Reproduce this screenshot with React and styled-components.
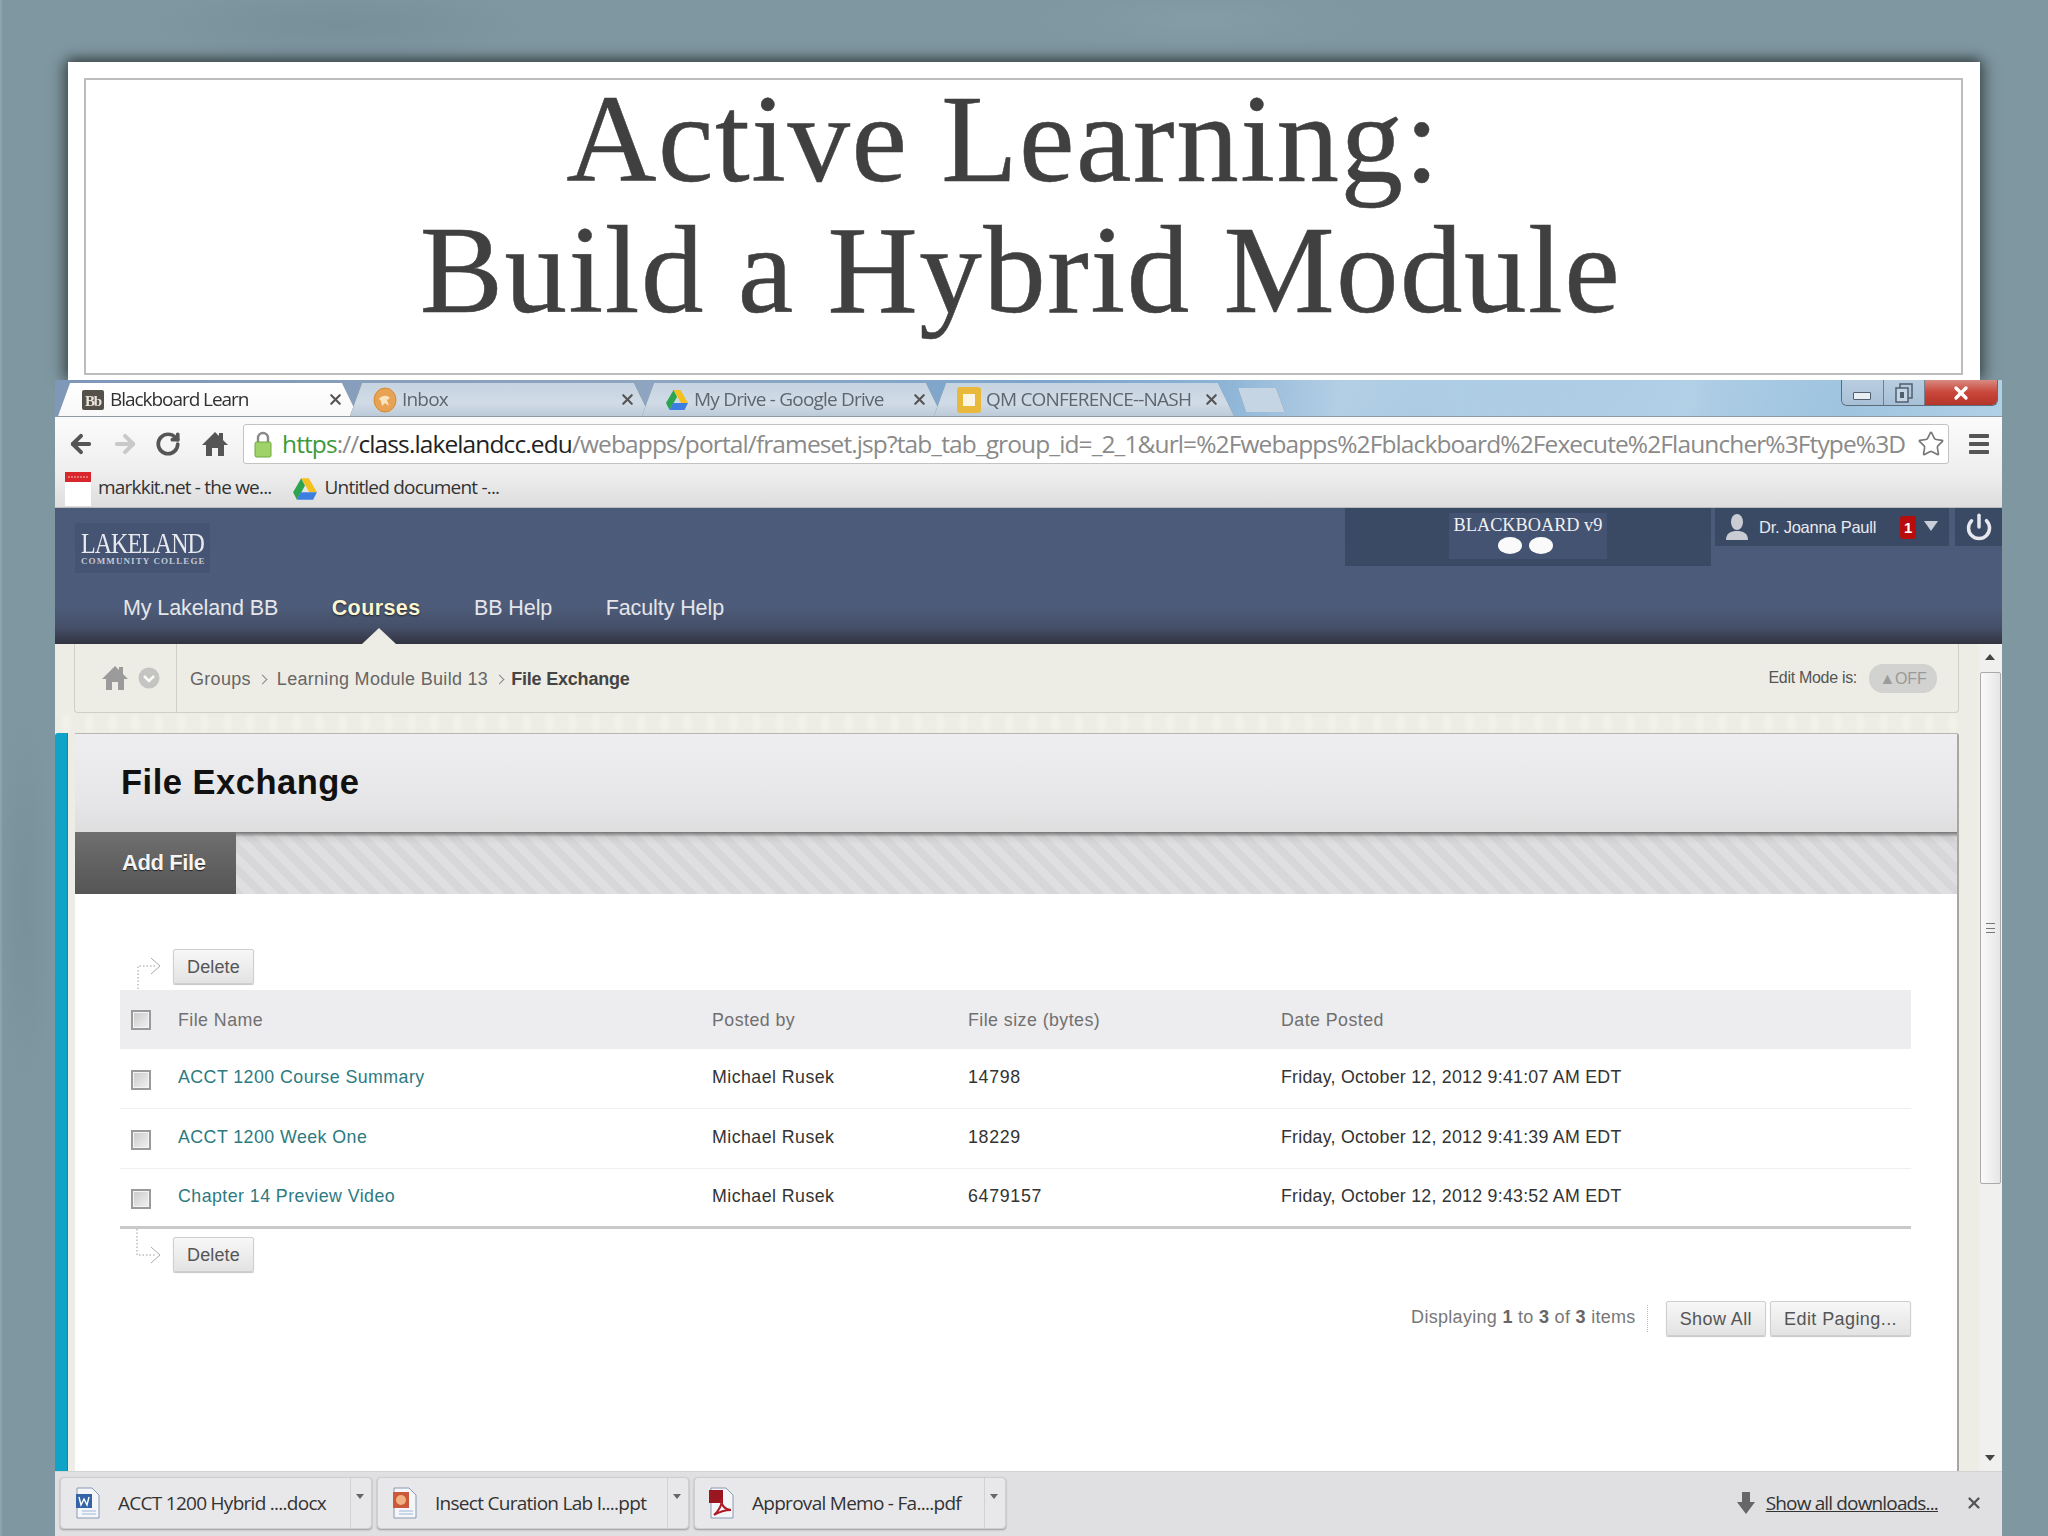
import React from "react";
import styled, { createGlobalStyle } from "styled-components";
import { ArrowLeft, ArrowRight, RotateCw, Star, Power, X } from "lucide-react";

const Global = createGlobalStyle`
  html, body { margin: 0; padding: 0; }
  body { width: 2048px; height: 1536px; overflow: hidden; background: #7f97a1; font-family: "Liberation Sans", Arial, sans-serif; }
  * { box-sizing: border-box; }
`;
const Page = styled.div`
  width: 2048px; height: 1536px; overflow: hidden; display: flex; flex-direction: column;
  background:
    radial-gradient(ellipse 200px 40px at 340px 25px, rgba(115,140,150,.7), transparent),
    radial-gradient(ellipse 160px 30px at 1200px 20px, rgba(135,160,170,.6), transparent),
    radial-gradient(ellipse 30px 200px at 25px 900px, rgba(115,140,150,.6), transparent),
    linear-gradient(90deg, #94a9b0 0, #7f97a1 3px, #7f97a1 100%);
  padding-top: 62px;
`;
const Slide = styled.section`
  margin-left: 68px; width: 1912px; height: 318px; flex: none; background: #fff;
  padding: 16px 17px 5px 16px;
  box-shadow: 0 -4px 10px rgba(50,60,60,.55), -6px 0 12px rgba(50,60,60,.5), 6px 0 12px rgba(50,60,60,.5);
`;
const SlideInner = styled.div`
  height: 100%; border: 2px solid #bdbdbd; text-align: center;
`;
const Title = styled.h1`
  margin: 0; padding: 0 40px 0 0; font: 400 125px/119px "Liberation Serif", "Times New Roman", serif; color: #404040; letter-spacing: 1.5px; -webkit-text-stroke: .5px #404040;
  & span { display: block; }
  & span + span { margin-left: 34px; line-height: 143px; }
`;
const Browser = styled.div`
  margin-left: 55px; width: 1947px; height: 1156px; flex: none; display: flex; flex-direction: column; position: relative;
`;
const TabStrip = styled.div`
  height: 37px; flex: none; display: flex; align-items: flex-end; padding-left: 3px; position: relative;
  border-bottom: 1px solid #8e9aa3;
  background:
    linear-gradient(100deg, transparent 50%, rgba(255,255,255,.35) 66%, rgba(255,255,255,.05) 72%, rgba(255,255,255,.3) 84%, transparent 92%),
    linear-gradient(90deg, #7f97b8 0, #8ea5c0 30%, #7ea6cc 48%, #6d9fcb 60%, #a9cbe3 72%, #8fbadb 85%, #b0d0e6 100%);
`;
const TabWrap = styled.div`
  width: 300px; height: 33px; margin-right: -8px; flex: none; filter: drop-shadow(0 0 .7px #5f6e7c);
`;
const Tab = styled.div`
  width: 100%; height: 100%; display: flex; align-items: center; gap: 5px; padding: 0 12px 0 23px;
  clip-path: polygon(0 100%, 12px 0, 284px 0, 300px 100%);
  background: ${p => p.$active ? "linear-gradient(#fff, #f8f8f8)" : "linear-gradient(#c6d3e0, #d0dbe6 60%, #bccbd9)"};
  color: ${p => p.$active ? "#303030" : "#5d666e"};
  font: 400 19px/33px "Open Sans", sans-serif; letter-spacing: ${p => p.$active ? "-1.05px" : "-.8px"}; white-space: nowrap;
`;
const TabLabel = styled.span`
  flex: 1; overflow: hidden;
`;
const TabClose = styled(X)`
  flex: none; color: #555; margin-right: 2px;
`;
const NewTabWrap = styled.div`
  width: 47px; height: 24px; margin-left: 12px; margin-bottom: 4px; filter: drop-shadow(0 0 .7px #5f6e7c);
`;
const NewTab = styled.div`
  width: 100%; height: 100%; clip-path: polygon(8px 100%, 0 0, 38px 0, 47px 100%); background: #c5d5e3;
`;
const WinCtrls = styled.div`
  position: absolute; top: 0; right: 4px; width: 157px; height: 26px; display: flex; border: 1px solid #5b6b7a; border-top: 0; border-radius: 0 0 6px 6px; overflow: hidden;
`;
const WinBtn = styled.div`
  width: ${p => p.$close ? 72 : 42}px; display: flex; align-items: center; justify-content: center; color: ${p => p.$close ? "#fff" : "#3f4f5f"};
  background: ${p => p.$close ? "linear-gradient(#d98a80, #c9463a 50%, #b4352a 100%)" : "linear-gradient(#b9cde0, #a8c0d6)"};
  border-right: ${p => p.$close ? "0" : "1px solid #71808f"};
`;
const MinGlyph = styled.span`
  display: block; width: 18px; height: 8px; margin-top: 6px; background: #e8eef4; border: 1.5px solid #4f5f6f; border-radius: 1px;
`;
const Toolbar = styled.div`
  height: 53px; flex: none; display: flex; align-items: center; padding: 0 0 0 12px; background: linear-gradient(#fbfbfb, #f0eff0);
`;
const NavIcon = styled.div`
  width: ${p => p.$w || 44}px; flex: none; display: flex; align-items: center; color: ${p => p.$muted ? "#c9c9c9" : "#555"};
`;
const Omnibox = styled.div`
  width: 1706px; height: 40px; flex: none; display: flex; align-items: center; background: #fff; border: 1px solid #c3c3c3; border-radius: 3px; padding-left: 9px; position: relative;
`;
const Url = styled.div`
  margin-left: 9px; flex: 1; font: 400 24.5px/40px "Open Sans", sans-serif; letter-spacing: -.89px; color: #8a8a8a; white-space: nowrap;
`;
const UrlGreen = styled.span` color: #3c9a3c; `;
const UrlHost = styled.span` color: #222; `;
const StarBtn = styled(Star)`
  flex: none; margin: 0 3px 0 6px; color: #777;
`;
const Menu = styled.div`
  margin-left: 20px; width: 20px; display: flex; flex-direction: column; gap: 4px;
  & i { display: block; height: 4px; background: #555; border-radius: 1px; }
`;
const Bookmarks = styled.div`
  height: 38px; flex: none; display: flex; align-items: center; padding-left: 10px; background: linear-gradient(#f0eff0, #dfdede); border-bottom: 1px solid #bbb;
  font: 400 19px/34px "Open Sans", sans-serif; letter-spacing: -.8px; color: #333;
`;
const Bookmark = styled.div`
  display: flex; align-items: center; gap: 7px; margin-right: 20px; white-space: nowrap;
  & > span { margin-top: -4px; }
`;
const Header = styled.header`
  height: 136px; flex: none; position: relative; display: flex; flex-direction: column;
  background: linear-gradient(#4a5a78 0, #4d5c7a 72%, #454f68 88%, #32333f 100%);
`;
const HeaderTop = styled.div`
  height: 74px; flex: none; display: flex; align-items: flex-start; padding-left: 20px;
`;
const Logo = styled.div`
  width: 135px; height: 50px; margin-top: 15px; background: #455472; color: #e8e9ee; padding: 7px 0 0 6px; font-family: "Liberation Serif", serif;
`;
const LogoMain = styled.div`
  font-size: 30px; line-height: 26px; letter-spacing: -1.2px; transform: scaleX(.8); transform-origin: left; white-space: nowrap;
`;
const LogoSub = styled.div`
  font-size: 9px; line-height: 11px; font-weight: 700; letter-spacing: 1.1px; white-space: nowrap; color: #c3c8d4;
`;
const BbBadge = styled.div`
  margin-left: 1135px; width: 366px; height: 58px; flex: none; background: #3a4964; display: flex; justify-content: center; padding-top: 5px;
`;
const BbInner = styled.div`
  width: 158px; height: 46px; padding-top: 1px; background: #445371; display: flex; flex-direction: column; align-items: center;
  color: #f0f0f2; font: 400 18.3px/23px "Liberation Serif", serif; white-space: nowrap;
`;
const Dots = styled.div`
  display: flex; gap: 7px; margin-right: 5px;
  & i { display: block; width: 24px; height: 17px; border-radius: 50%; background: #fafafa; }
`;
const UserBox = styled.div`
  margin-left: 4px; width: 234px; height: 38px; flex: none; background: #3a4964; display: flex; align-items: center; padding-left: 10px; color: #e8eaf0; font-size: 16.5px; letter-spacing: -.25px; white-space: nowrap;
`;
const Badge = styled.span`
  display: block; width: 16px; height: 23px; margin-left: 24px; background: #b80d0d; border-radius: 3px; color: #fff; font: 700 15px/23px "Liberation Sans", sans-serif; text-align: center;
`;
const Caret = styled.span`
  display: block; margin-left: 8px; margin-top: -3px; border: 7px solid transparent; border-top: 10px solid #c9ced8; border-bottom: 0;
`;
const PowerBox = styled.div`
  margin-left: 6px; width: 47px; height: 38px; flex: none; background: #3a4964; color: #e6e8ee; display: flex; align-items: center; justify-content: center;
`;
const MainNav = styled.nav`
  display: flex; padding-left: 68px; gap: 53.5px; margin-top: 12px; font-size: 21.5px; line-height: 28px; color: #e5e6ea; letter-spacing: -.1px;
`;
const NavItem = styled.span`
  color: ${p => p.$active ? "#fbf6d2" : "#e5e6ea"}; font-weight: ${p => p.$active ? 700 : 400}; white-space: nowrap;
  letter-spacing: ${p => p.$active ? ".4px" : "inherit"};
  text-shadow: ${p => p.$active ? "0 1px 2px #222" : "none"};
`;
const Notch = styled.div`
  position: absolute; left: 307px; bottom: 0; border: 17px solid transparent; border-bottom: 16px solid #eeede5; border-top: 0;
`;
const Viewport = styled.div`
  flex: 1; min-height: 0; display: flex;
`;
const Main = styled.main`
  width: 1924px; flex: none; background: #eeede5; padding-right: 20px; display: flex; flex-direction: column;
`;
const Crumbs = styled.div`
  height: 69px; flex: none; margin-left: 19px; display: flex; align-items: center; border: 1px solid #d0cfc6; border-top: 0; border-radius: 0 0 4px 4px;
  color: #666; font-size: 18px; letter-spacing: .3px;
`;
const CrumbIcons = styled.div`
  width: 102px; height: 100%; flex: none; display: flex; align-items: center; gap: 9px; padding-left: 26px; border-right: 1px solid #d0cfc6;
`;
const CrumbPath = styled.div`
  flex: 1; display: flex; align-items: center; gap: 8px; padding: 2px 0 0 13px; white-space: nowrap;
`;
const Chevron = styled.span`
  display: block; width: 7px; height: 7px; margin: 0 3px 0 0; border-top: 1.5px solid #888; border-right: 1.5px solid #888; transform: rotate(45deg);
`;
const CrumbNow = styled.b` color: #444; letter-spacing: -.2px; margin-left: -3px; `;
const EditLabel = styled.span`
  font-size: 16px; letter-spacing: -.3px; color: #555; margin-right: 12px; white-space: nowrap;
`;
const Toggle = styled.div`
  width: 68px; height: 29px; margin-right: 21px; border-radius: 14px; background: #d2d2d0; color: #9a9a9a; font-size: 16px; line-height: 29px; text-align: center; letter-spacing: -.2px; white-space: nowrap;
`;
const Band = styled.div`
  height: 20px; flex: none;
  background: radial-gradient(ellipse 4px 8px, #f3f2ea 2px, transparent 6px) 0 0 / 23px 20px repeat-x;
`;
const ContentRow = styled.div`
  flex: 1; min-height: 0; display: flex;
`;
const TealBar = styled.div`
  width: 13px; flex: none; margin-right: 7px; background: #0ea4c8; border-radius: 3px 0 0 0; border-right: 1px solid #0d8aa8;
`;
const Panel = styled.div`
  flex: 1; min-width: 0; display: flex; flex-direction: column; background: #fff; border-right: 2px solid #a8a8a2; border-radius: 3px 3px 0 0;
`;
const PageTitle = styled.div`
  height: 99px; flex: none; background: linear-gradient(#eeeef0, #e6e6e8 70%, #dededf); border-top: 1px solid #b9b8ae; padding-left: 46px;
  font: 700 34.5px/97px "Liberation Sans", sans-serif; color: #111; letter-spacing: .5px;
`;
const ActionBar = styled.div`
  height: 62px; flex: none; display: flex;
  background:
    linear-gradient(rgba(90,90,90,.8), rgba(120,120,120,.12) 5px, rgba(120,120,120,0) 12px),
    repeating-linear-gradient(45deg, #d7d6d8 0 8px, #dfdee0 8px 16px);
`;
const AddFile = styled.div`
  width: 161px; background: linear-gradient(#706f6f, #565555); color: #f4f4f4; font: 700 22px/62px "Liberation Sans", sans-serif; padding-left: 47px; text-shadow: 0 1px 1px #222; letter-spacing: -.4px;
`;
const Body = styled.div`
  flex: 1; padding: 55px 46px 0 45px; display: flex; flex-direction: column;
`;
const ActionRow = styled.div`
  display: flex; align-items: flex-start; height: ${p => p.$h}px; flex: none; padding-left: 15px;
`;
const Connector = styled.svg`
  width: 38px; height: 41px; flex: none; display: block;
`;
const Btn = styled.div`
  height: 35px; padding: 0 13px; flex: none; background: linear-gradient(#f7f7f7, #e3e3e3); border: 1px solid #cfcfcf; border-radius: 2px; box-shadow: 0 1px 1px #c5c5c5;
  font-size: 18px; line-height: 35px; letter-spacing: .15px; color: #555; white-space: nowrap;
`;
const BtnLow = styled(Btn)`
  margin-top: 8px;
`;
const PagingBtn = styled(Btn)`
  letter-spacing: .42px;
`;
const Row = styled.div`
  display: grid; grid-template-columns: 58px 534px 256px 313px 1fr; align-items: center; height: ${p => p.$head ? 59 : 60}px; flex: none;
  padding-top: ${p => p.$head ? 1 : 0}px;
  background: ${p => p.$head ? "#edecee" : "#fff"};
  border-bottom: ${p => p.$last ? "3px solid #c9c9c9" : p.$head ? "0" : "1px solid #efefef"};
  font-size: 17.8px; letter-spacing: .45px; color: ${p => p.$head ? "#707070" : "#444"}; white-space: nowrap;
`;
const Check = styled.span`
  display: block; width: 20px; height: 20px; margin: ${p => p.$head ? "0" : "2px"} 0 0 11px; border: 2px solid #9a9a9a; background: linear-gradient(135deg, #c9c9c9, #f2f2f2);
  box-shadow: inset 0 0 0 1px #f4f4f4;
`;
const FileLink = styled.span`
  color: #2d7a80; margin-top: -2px;
`;
const Cell = styled.span`
  color: #333; margin-top: -2px; letter-spacing: ${p => p.$ls || ".45px"};
`;
const Paging = styled.div`
  margin-top: 30px; display: flex; justify-content: flex-end; align-items: center; gap: 4px; font-size: 18px; color: #777;
`;
const PagingText = styled.div`
  padding-right: 11px; margin-right: 14px; border-right: 1px dotted #bbb; height: 27px; line-height: 24px; letter-spacing: .3px; white-space: nowrap;
  & b { color: #666; }
`;
const Scrollbar = styled.div`
  flex: 1; position: relative; background: #f0f0ee;
`;
const ScrollThumb = styled.div`
  position: absolute; left: 1px; right: 1px; top: 28px; height: 512px; background: linear-gradient(90deg, #fafafa, #e6e6e6); border: 1px solid #aaa; border-radius: 2px; display: flex; align-items: center; justify-content: center;
  &::after { content: ""; width: 9px; height: 8px; border-top: 1px solid #777; border-bottom: 1px solid #777; background: linear-gradient(#777,#777) center / 100% 1px no-repeat; }
`;
const ScrollArrow = styled.span`
  position: absolute; left: 6px; ${p => p.$up ? "top: 10px;" : "bottom: 10px;"} border: 5px solid transparent;
  ${p => p.$up ? "border-bottom: 6px solid #444; border-top: 0;" : "border-top: 6px solid #444; border-bottom: 0;"}
`;
const Downloads = styled.footer`
  height: 65px; flex: none; background: #e0dfe1; border-top: 1px solid #d3d3d3; display: flex; align-items: flex-start; padding: 5px 0 0 5px; font: 400 19px/50px "Open Sans", sans-serif; letter-spacing: -.72px; color: #333;
`;
const DlItem = styled.div`
  width: 312px; height: 52px; flex: none; margin-right: 5px; display: flex; align-items: center; background: #e8e7e9; border: 1px solid #cfcfcf; border-radius: 4px; box-shadow: 0 1px 2px #999;
`;
const DlMain = styled.div`
  width: 290px; flex: none; height: 100%; display: flex; align-items: center; gap: 17px; padding-left: 14px; border-right: 1px solid #d2d2d2; white-space: nowrap;
`;
const DlArrow = styled.span`
  display: block; margin: -14px 0 0 5px; border: 4px solid transparent; border-top: 5px solid #666; border-bottom: 0;
`;
const ShowAll = styled.div`
  margin-left: auto; height: 52px; display: flex; align-items: center; gap: 11px; padding-right: 19px; white-space: nowrap; letter-spacing: -.85px;
  & u { color: #333; }
`;
const DlClose = styled(X)`
  margin-left: 16px; color: #555;
`;

const Drive = ({ s = 24 }) => (
  <svg width={s} height={s} viewBox="0 0 24 24" style={{ flex: "none" }}>
    <path d="M8.5 2h7L23 15h-7z" fill="#f4c01e" />
    <path d="M8.5 2 1 15l3.5 7L12 9z" fill="#2da44e" />
    <path d="M4.5 22h15L23 15H8z" fill="#3d7fe0" />
  </svg>
);
const BbIcon = () => (
  <svg width="24" height="24" viewBox="0 0 24 24" style={{ flex: "none" }}>
    <rect x="1" y="2" width="22" height="20" rx="2" fill="#55504a" />
    <text x="12" y="18" fontFamily="Liberation Serif" fontSize="15" fontWeight="700" textAnchor="middle" fill="#e9e5da">Bb</text>
  </svg>
);
const InboxIcon = () => (
  <svg width="24" height="26" viewBox="0 0 24 26" style={{ flex: "none" }}>
    <ellipse cx="12" cy="13" rx="11" ry="12" fill="#e8a254" stroke="#d48a30" />
    <path d="M6 12c3-4 8-4 11-1l-3 2 2 6-4-3-3 3-1-5z" fill="#fbe3c0" />
  </svg>
);
const SlideIcon = () => (
  <svg width="24" height="26" viewBox="0 0 24 26" style={{ flex: "none" }}>
    <rect x="0" y="0" width="24" height="26" rx="3" fill="#e8b93a" />
    <rect x="6" y="7" width="12" height="12" fill="#fbf6e4" />
  </svg>
);
const Lock = () => (
  <svg width="20" height="28" viewBox="0 0 20 28" style={{ flex: "none" }}>
    <path d="M5 13V8a5 5 0 0 1 10 0v5" fill="none" stroke="#8a8a8a" strokeWidth="2.4" />
    <rect x="2" y="12" width="16" height="15" rx="1.5" fill="#9fd36a" stroke="#6fa83c" />
  </svg>
);
const Home = ({ c = "#555", s = 28 }) => (
  <svg width={s} height={s} viewBox="0 0 28 28" style={{ flex: "none", display: "block" }}>
    <path d="M14 2 1 15h4v11h6v-8h6v8h6V15h4l-5-5V3h-4v3z" fill={c} />
  </svg>
);
const Calendar = () => (
  <svg width="26" height="34" viewBox="0 0 26 34" style={{ flex: "none" }}>
    <rect width="26" height="34" fill="#fff" />
    <rect width="26" height="10" fill="#d8262c" />
    <path d="M3 5h20" stroke="#f4c0c0" strokeDasharray="2 1" />
  </svg>
);
const Person = () => (
  <svg width="24" height="26" viewBox="0 0 24 26" style={{ flex: "none", marginRight: 10 }}>
    <ellipse cx="12" cy="8" rx="6" ry="8" fill="#c9ccd2" />
    <path d="M1 26c0-7 5-9 11-9s11 2 11 9z" fill="#c9ccd2" />
  </svg>
);
const DownCircle = () => (
  <svg width="22" height="22" viewBox="0 0 22 22" style={{ flex: "none" }}>
    <circle cx="11" cy="11" r="10.5" fill="#c4c4c2" />
    <path d="M6 9l5 5 5-5" fill="none" stroke="#fafaf6" strokeWidth="2.5" />
  </svg>
);
const DocBase = ({ children }) => (
  <svg width="26" height="32" viewBox="0 0 26 32" style={{ flex: "none" }}>
    <path d="M2 1h15l7 7v23H2z" fill="#f4f6fa" stroke="#8a9ab4" />
    {children}
  </svg>
);
const WordIcon = () => (
  <DocBase>
    <rect x="1" y="7" width="16" height="14" fill="#3563a8" />
    <path d="M4 10l2 8 3-6 3 6 2-8" stroke="#fff" strokeWidth="1.4" fill="none" />
    <path d="M7 24h14M7 27h14" stroke="#9fb4d6" />
  </DocBase>
);
const PptIcon = () => (
  <DocBase>
    <rect x="1" y="5" width="16" height="16" fill="#c9593a" />
    <circle cx="9" cy="13" r="5" fill="#f0b080" />
    <path d="M7 24h14M7 27h14" stroke="#9fb4d6" />
  </DocBase>
);
const PdfIcon = () => (
  <DocBase>
    <rect x="0" y="3" width="14" height="13" fill="#9a1620" />
    <path d="M5 28c5-4 9-12 7-16 0 6 4 11 10 11-6 0-12 2-17 5z" fill="none" stroke="#b01a24" strokeWidth="2" />
  </DocBase>
);
const DownArrow = () => (
  <svg width="18" height="22" viewBox="0 0 18 22" style={{ flex: "none" }}>
    <path d="M5 0h8v10h5l-9 12L0 10h5z" fill="#666" />
  </svg>
);

const rows = [
  ["ACCT 1200 Course Summary", "14798", "Friday, October 12, 2012 9:41:07 AM EDT"],
  ["ACCT 1200 Week One", "18229", "Friday, October 12, 2012 9:41:39 AM EDT"],
  ["Chapter 14 Preview Video", "6479157", "Friday, October 12, 2012 9:43:52 AM EDT"],
];

const tabs = [
  { icon: <BbIcon />, label: "Blackboard Learn", active: true },
  { icon: <InboxIcon />, label: "Inbox" },
  { icon: <Drive />, label: "My Drive - Google Drive" },
  { icon: <SlideIcon />, label: "QM CONFERENCE--NASH" },
];

export default function App() {
  return (
    <Page>
      <Global />
      <Slide>
        <SlideInner>
          <Title>
            <span>Active Learning:</span>
            <span>Build a Hybrid Module</span>
          </Title>
        </SlideInner>
      </Slide>
      <Browser>
        <TabStrip>
          {tabs.map(t => (
            <TabWrap key={t.label}>
              <Tab $active={t.active}>{t.icon}<TabLabel>{t.label}</TabLabel><TabClose size={17} strokeWidth={3} /></Tab>
            </TabWrap>
          ))}
          <NewTabWrap><NewTab /></NewTabWrap>
          <WinCtrls>
            <WinBtn><MinGlyph /></WinBtn>
            <WinBtn><svg width="18" height="20" viewBox="0 0 18 20"><rect x="5" y="1" width="12" height="14" fill="none" stroke="#4f5f6f" strokeWidth="1.5" /><rect x="1" y="5" width="12" height="14" fill="#c5d5e4" stroke="#4f5f6f" strokeWidth="1.5" /><rect x="5" y="9" width="4" height="6" fill="#4f5f6f" /></svg></WinBtn>
            <WinBtn $close><X size={20} strokeWidth={4} /></WinBtn>
          </WinCtrls>
        </TabStrip>
        <Toolbar>
          <NavIcon $w={44}><ArrowLeft size={28} strokeWidth={3.4} /></NavIcon>
          <NavIcon $w={44} $muted><ArrowRight size={28} strokeWidth={3.4} /></NavIcon>
          <NavIcon $w={46}><RotateCw size={26} strokeWidth={3.4} /></NavIcon>
          <NavIcon $w={42}><Home /></NavIcon>
          <Omnibox>
            <Lock />
            <Url><UrlGreen>https</UrlGreen>://<UrlHost>class.lakelandcc.edu</UrlHost>/webapps/portal/frameset.jsp?tab_tab_group_id=_2_1&amp;url=%2Fwebapps%2Fblackboard%2Fexecute%2Flauncher%3Ftype%3D</Url>
            <StarBtn size={28} strokeWidth={1.4} />
          </Omnibox>
          <Menu><i /><i /><i /></Menu>
        </Toolbar>
        <Bookmarks>
          <Bookmark><Calendar /><span>markkit.net - the we...</span></Bookmark>
          <Bookmark><Drive s={26} /><span>Untitled document -...</span></Bookmark>
        </Bookmarks>
        <Header>
          <HeaderTop>
            <Logo>
              <LogoMain>LAKELAND</LogoMain>
              <LogoSub>COMMUNITY COLLEGE</LogoSub>
            </Logo>
            <BbBadge>
              <BbInner>
                BLACKBOARD v9
                <Dots><i /><i /></Dots>
              </BbInner>
            </BbBadge>
            <UserBox><Person />Dr. Joanna Paull<Badge>1</Badge><Caret /></UserBox>
            <PowerBox><Power size={28} strokeWidth={3} /></PowerBox>
          </HeaderTop>
          <MainNav>
            <NavItem>My Lakeland BB</NavItem>
            <NavItem $active>Courses</NavItem>
            <NavItem>BB Help</NavItem>
            <NavItem>Faculty Help</NavItem>
          </MainNav>
          <Notch />
        </Header>
        <Viewport>
          <Main>
            <Crumbs>
              <CrumbIcons><Home c="#9b9b9b" /><DownCircle /></CrumbIcons>
              <CrumbPath>
                Groups<Chevron />Learning Module Build 13<Chevron /><CrumbNow>File Exchange</CrumbNow>
              </CrumbPath>
              <EditLabel>Edit Mode is:</EditLabel>
              <Toggle>▲OFF</Toggle>
            </Crumbs>
            <Band />
            <ContentRow>
              <TealBar />
              <Panel>
                <PageTitle>File Exchange</PageTitle>
                <ActionBar><AddFile>Add File</AddFile></ActionBar>
                <Body>
                  <ActionRow $h={41}>
                    <Connector viewBox="0 0 38 41">
                      <path d="M3 40V17h18" fill="none" stroke="#999" strokeDasharray="1.5 2" />
                      <path d="M16 9l9 8-9 8" fill="none" stroke="#aaa" />
                    </Connector>
                    <Btn>Delete</Btn>
                  </ActionRow>
                  <Row $head>
                    <Check $head /><span>File Name</span><span>Posted by</span><span>File size (bytes)</span><span>Date Posted</span>
                  </Row>
                  {rows.map((r, i) => (
                    <Row key={r[0]} $last={i === 2}>
                      <Check />
                      <FileLink>{r[0]}</FileLink>
                      <Cell>Michael Rusek</Cell>
                      <Cell $ls=".7px">{r[1]}</Cell>
                      <Cell $ls=".25px">{r[2]}</Cell>
                    </Row>
                  ))}
                  <ActionRow $h={42}>
                    <Connector viewBox="0 0 38 41">
                      <path d="M2 0V26h18" fill="none" stroke="#999" strokeDasharray="1.5 2" />
                      <path d="M16 18l9 8-9 8" fill="none" stroke="#aaa" />
                    </Connector>
                    <BtnLow>Delete</BtnLow>
                  </ActionRow>
                  <Paging>
                    <PagingText>Displaying <b>1</b> to <b>3</b> of <b>3</b> items</PagingText>
                    <PagingBtn>Show All</PagingBtn>
                    <PagingBtn>Edit Paging...</PagingBtn>
                  </Paging>
                </Body>
              </Panel>
            </ContentRow>
          </Main>
          <Scrollbar>
            <ScrollArrow $up />
            <ScrollThumb />
            <ScrollArrow />
          </Scrollbar>
        </Viewport>
        <Downloads>
          <DlItem><DlMain><WordIcon />ACCT 1200 Hybrid ....docx</DlMain><DlArrow /></DlItem>
          <DlItem><DlMain><PptIcon />Insect Curation Lab I....ppt</DlMain><DlArrow /></DlItem>
          <DlItem><DlMain><PdfIcon />Approval Memo - Fa....pdf</DlMain><DlArrow /></DlItem>
          <ShowAll><DownArrow /><u>Show all downloads...</u><DlClose size={18} strokeWidth={3} /></ShowAll>
        </Downloads>
      </Browser>
    </Page>
  );
}
